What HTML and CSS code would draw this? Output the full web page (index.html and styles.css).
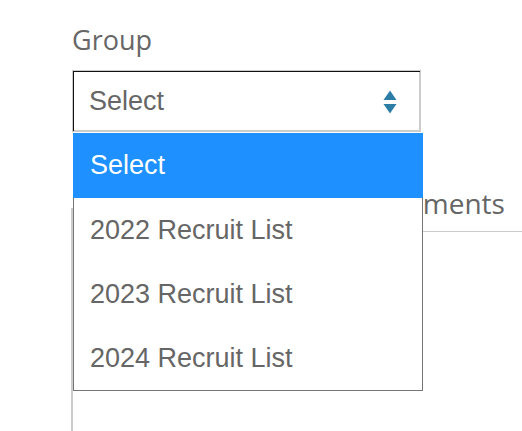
FILE: index.html
```html
<!DOCTYPE html>
<html>
<head>
<meta charset="utf-8">
<link rel="stylesheet" href="styles.css">
</head>
<body>
<div class="page">
  <div class="field">
    <label class="label">Group</label>
    <div class="select-wrap">
      <div class="select">
        <span class="select-value">Select</span>
        <svg class="arrows" width="14" height="24" viewBox="0 0 14 24">
          <polygon points="7,0.5 13.5,10 0.5,10" fill="#2b7da5"/>
          <polygon points="0.5,14 13.5,14 7,23.5" fill="#2b7da5"/>
        </svg>
      </div>
      <ul class="menu">
        <li class="option selected">Select</li>
        <li class="option">2022 Recruit List</li>
        <li class="option">2023 Recruit List</li>
        <li class="option">2024 Recruit List</li>
      </ul>
    </div>
  </div>
  <div class="tabs">
    <div class="tab first"></div>
    <div class="tab">Documents</div>
    <div class="tab-fill"></div>
  </div>
  <div class="panel"></div>
</div>
</body>
</html>
```
FILE: styles.css
```css
html, body {
  margin: 0;
  padding: 0;
  background: #fff;
}
.page {
  width: 522px;
  height: 431px;
  overflow: hidden;
  padding-left: 71px;
  box-sizing: border-box;
  font-family: "Open Sans", sans-serif;
  color: #666;
}
.field {
  padding-top: 22px;
}
.label {
  display: block;
  font-size: 27px;
  line-height: 36px;
  padding-left: 1px;
  margin-bottom: 12px;
}
.select-wrap {
  position: relative;
  margin-left: 1px;
  width: 349px;
}
.select {
  height: 62px;
  box-sizing: border-box;
  border: 1px solid #ccc;
  box-shadow: inset 1px 1px 0 #111, inset -1px -1px 0 #ccc;
  display: flex;
  align-items: center;
  justify-content: space-between;
  padding: 0 23px 0 16px;
  font-family: "Liberation Sans", Arial, sans-serif;
  font-size: 27px;
  color: #666;
}
.arrows {
  display: block;
  margin-top: 1px;
}
.menu {
  position: absolute;
  z-index: 2;
  left: 1px;
  top: 63px;
  width: 350px;
  box-sizing: border-box;
  margin: 0;
  padding: 0;
  list-style: none;
  background: #fff;
  border: 1px solid #767676;
  font-family: "Liberation Sans", Arial, sans-serif;
  font-size: 27px;
  color: #666;
}
.option {
  height: 64px;
  display: flex;
  align-items: center;
  padding-left: 16px;
}
.option.selected {
  background: #1e90ff;
  color: #fff;
  margin: -1px -1px 0 -1px;
  padding-left: 17px;
  height: 65px;
}
.tabs {
  display: flex;
  align-items: flex-end;
  margin-top: 52px;
  height: 48px;
  box-sizing: border-box;
}
.tab {
  font-size: 28px;
  line-height: 36px;
  padding: 0 0 10px 0;
  border-bottom: 1px solid #ccc;
  margin-left: 282px;
}
.tab.first {
  margin-left: 0;
  height: 24px;
  box-sizing: border-box;
  padding: 0;
  border-left: 2px solid #ccc;
  width: 0;
}
.tab-fill {
  flex: 1;
  border-bottom: 1px solid #ccc;
}
.panel {
  border-left: 2px solid #ccc;
  height: 220px;
}
```
